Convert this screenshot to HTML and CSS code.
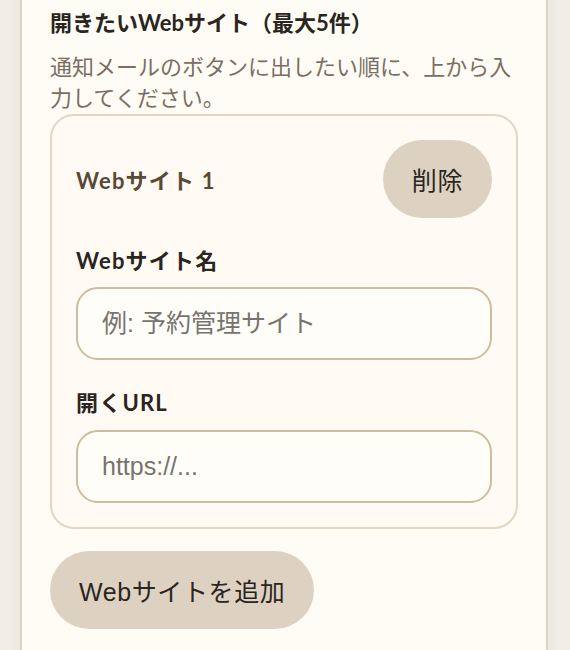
FILE: index.html
```html
<!DOCTYPE html>
<html lang="ja">
<head>
<meta charset="utf-8">
<title>Webサイト設定</title>
<link rel="stylesheet" href="styles.css">
</head>
<body>
<main class="panel">
  <h2 class="section-title">開きたいWebサイト（最大5件）</h2>
  <p class="section-desc">通知メールのボタンに出したい順に、上から入力してください。</p>
  <div class="site-card">
    <div class="site-head">
      <span class="site-title">Webサイト 1</span>
      <button class="btn" type="button">削除</button>
    </div>
    <label class="field">
      <span class="field-label">Webサイト名</span>
      <input class="field-input" type="text" placeholder="例: 予約管理サイト">
    </label>
    <label class="field">
      <span class="field-label">開くURL</span>
      <input class="field-input" type="text" placeholder="https://...">
    </label>
  </div>
  <div class="actions">
    <button class="btn" type="button">Webサイトを追加</button>
  </div>
</main>
</body>
</html>
```
FILE: styles.css
```css
html, body {
  margin: 0;
  padding: 0;
}
body {
  background: #f1ede7;
  font-family: "Lato", "Noto Sans CJK JP", sans-serif;
  color: #2a2520;
  height: 650px;
  overflow: hidden;
}
.panel {
  box-sizing: border-box;
  width: 528px;
  margin: -24px 0 0 20px;
  padding: 28px 28px 40px;
  background: #fffcf6;
  border: 2px solid #ddd2c2;
  border-radius: 0 0 24px 24px;
  box-shadow: 0 0 14px rgba(120, 100, 70, 0.08);
  min-height: 720px;
}
.section-title {
  margin: 0 0 11px;
  font-size: 22px;
  line-height: 33px;
  font-weight: 700;
  color: #2a2520;
}
.section-desc {
  margin: 0 0 2px;
  font-family: "Noto Sans CJK JP", sans-serif;
  font-size: 22px;
  line-height: 31px;
  color: #7a6e62;
}
.site-card {
  display: flex;
  flex-direction: column;
  gap: 28px;
  padding: 24px;
  border: 2px solid #e1d7c6;
  border-radius: 24px;
  background: #fffaf3;
}
.site-head {
  display: flex;
  align-items: center;
  justify-content: space-between;
}
.site-title {
  font-size: 22px;
  font-weight: 700;
  letter-spacing: 1.2px;
  color: #5a4935;
}
.btn {
  display: inline-flex;
  align-items: center;
  height: 78px;
  padding: 0 29px;
  border: none;
  border-radius: 999px;
  background: #ddd2c2;
  color: #2a2520;
  font-family: "Liberation Sans", "Noto Sans CJK JP", sans-serif;
  font-size: 25px;
  letter-spacing: 0.6px;
}
.field {
  display: flex;
  flex-direction: column;
  gap: 11px;
}
.field + .field .field-label {
  margin-bottom: 1px;
}
.field-label {
  font-size: 22px;
  line-height: 30px;
  font-weight: 700;
  letter-spacing: 1.2px;
  color: #2a2520;
}
.field-input {
  box-sizing: border-box;
  width: 100%;
  height: 73px;
  padding: 0 24px;
  border: 2px solid #cdbd9e;
  border-radius: 22px;
  background: #fffdf8;
  font-family: "Liberation Sans", "Noto Sans CJK JP", sans-serif;
  font-size: 25px;
  color: #2a2520;
  outline: none;
}
.field-input::placeholder {
  color: #777370;
}
.actions {
  margin-top: 22px;
  display: flex;
}
```
